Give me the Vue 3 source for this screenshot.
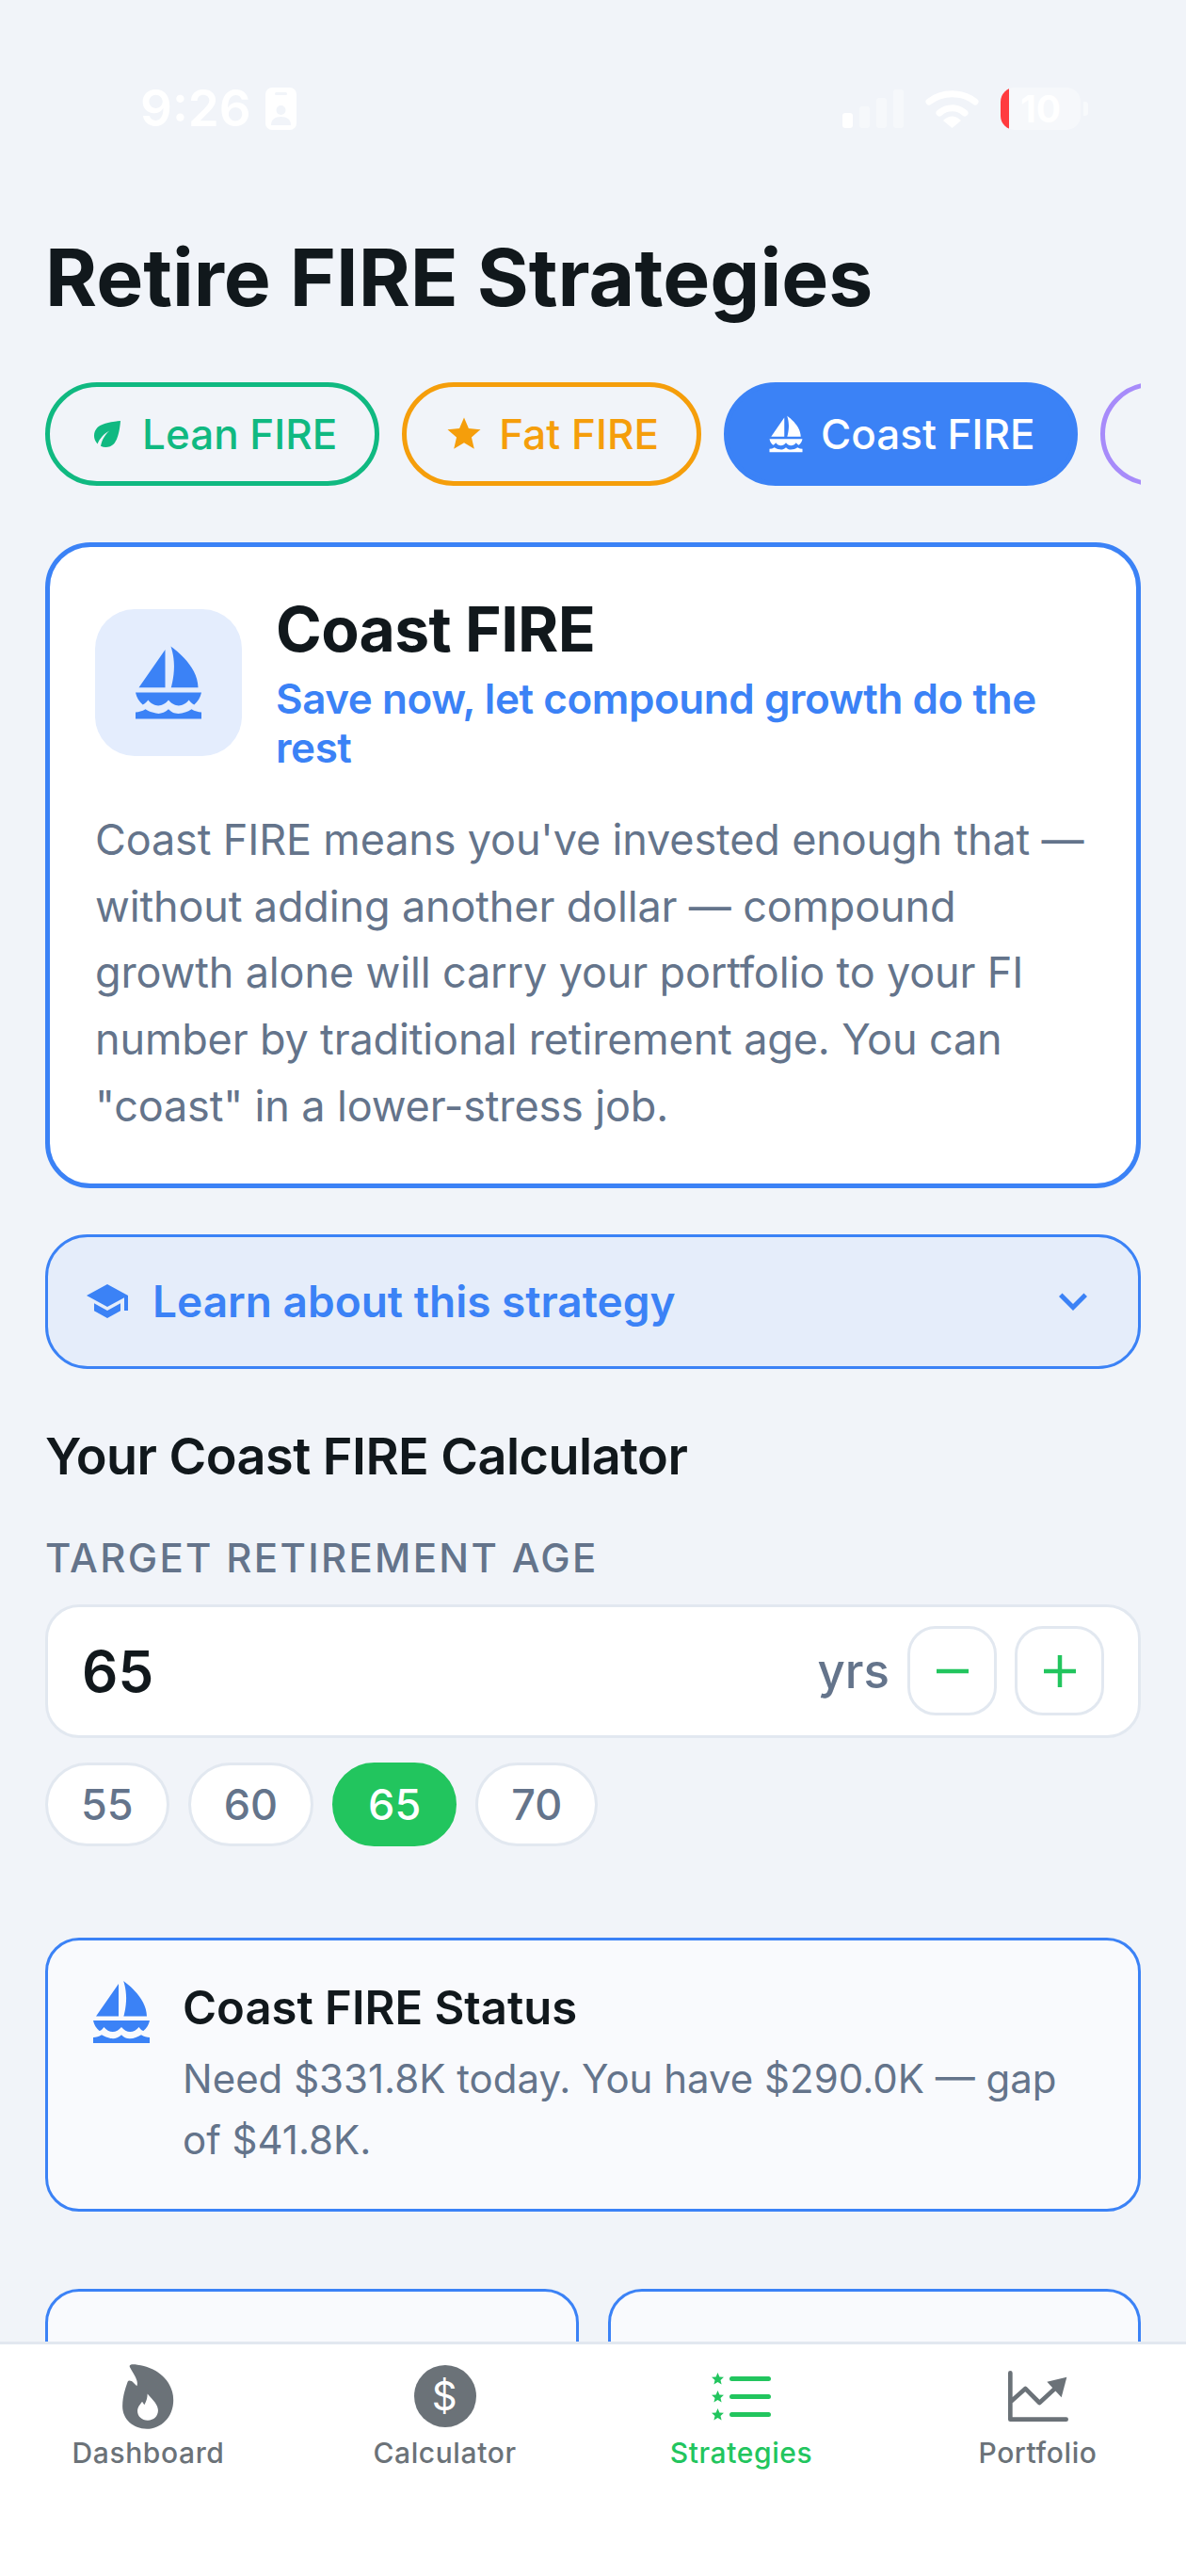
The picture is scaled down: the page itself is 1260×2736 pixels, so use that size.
<template>
  <div class="screen">
    <div class="main">
      <div class="status-bar">
        <div class="status-left">
          <span class="time">9:26</span>
          <svg class="id-icon" viewBox="0 0 33 45">
            <rect width="33" height="45" rx="7" fill="#fff" />
            <rect x="10" y="5" width="13" height="3" rx="1.5" fill="#f1f4f9" />
            <circle cx="16.5" cy="24" r="5" fill="#f1f4f9" />
            <path d="M6 40c0-6 4-9 10.5-9S27 34 27 40z" fill="#f1f4f9" />
          </svg>
        </div>
        <div class="status-right">
          <svg class="signal" viewBox="0 0 65 41">
            <rect x="0" y="25" width="11" height="16" rx="3" fill="#fff" />
            <rect x="18" y="18" width="11" height="23" rx="3" fill="#fff" opacity="0.4" />
            <rect x="36" y="9" width="11" height="32" rx="3" fill="#fff" opacity="0.4" />
            <rect x="54" y="0" width="11" height="41" rx="3" fill="#fff" opacity="0.4" />
          </svg>
          <svg class="wifi" viewBox="0 0 57 42">
            <path d="M4 14C18 3 39 3 53 14" fill="none" stroke="#fff" stroke-width="7" stroke-linecap="round" />
            <path d="M15 26C23 19 34 19 42 26" fill="none" stroke="#fff" stroke-width="7" stroke-linecap="round" />
            <path d="M28.500 42L19 34C25 28 32 28 38 34z" fill="#fff" />
          </svg>
          <div class="battery">
            <div class="battery-level"></div>
            10
          </div>
          <div class="battery-nub"></div>
        </div>
      </div>

      <h1 class="page-title">Retire FIRE Strategies</h1>

      <div class="chips">
        <button v-for="chip in chips" :key="chip.name" class="chip" :class="chip.cls">
          <svg class="chip-icon" viewBox="0 0 24 24" fill="currentColor"><path :d="chip.icon" /></svg>
          {{ chip.name }}
        </button>
      </div>

      <section class="hero-card">
        <div class="hero-head">
          <div class="hero-icon">
            <svg viewBox="0 0 24 24" fill="#3b82f6"><path :d="sailboat" /></svg>
          </div>
          <div>
            <h2 class="hero-title">Coast FIRE</h2>
            <p class="hero-sub">Save now, let compound growth do the rest</p>
          </div>
        </div>
        <p class="hero-desc">
          Coast FIRE means you've invested enough that — without adding another dollar — compound growth alone will carry your portfolio to your FI number by traditional retirement age. You can "coast" in a lower-stress job.
        </p>
      </section>

      <button class="learn">
        <svg class="learn-icon" viewBox="0 0 24 24" fill="#3b82f6">
          <path d="M5 13.180v4L12 21l7-3.820v-4L12 17l-7-3.820zM12 3L1 9l11 6 9-4.910V17h2V9L12 3z" />
        </svg>
        <span class="learn-text">Learn about this strategy</span>
        <svg class="learn-chevron" viewBox="0 0 24 24" fill="#3b82f6">
          <path d="M16.590 8.590L12 13.170 7.410 8.590 6 10l6 6 6-6z" />
        </svg>
      </button>

      <h3 class="calc-title">Your Coast FIRE Calculator</h3>
      <div class="field-label">TARGET RETIREMENT AGE</div>
      <div class="age-input">
        <span class="age-value">65</span>
        <span class="age-unit">yrs</span>
        <button class="step-btn">
          <svg viewBox="0 0 34 34"><path d="M0 17H34" /></svg>
        </button>
        <button class="step-btn">
          <svg viewBox="0 0 34 34"><path d="M0 17H34M17 0V34" /></svg>
        </button>
      </div>
      <div class="age-pills">
        <button v-for="age in ages" :key="age" class="pill" :class="{ 'pill--active': age === 65 }">{{ age }}</button>
      </div>

      <section class="status-card">
        <svg class="status-icon" viewBox="0 0 24 24" fill="#3b82f6"><path :d="sailboat" /></svg>
        <div>
          <div class="status-title">Coast FIRE Status</div>
          <p class="status-text">Need $331.8K today. You have $290.0K — gap of $41.8K.</p>
        </div>
      </section>

      <div class="stat-grid">
        <div class="stat-card"></div>
        <div class="stat-card"></div>
      </div>
    </div>

    <nav class="tabbar">
      <div class="tab">
        <div class="tab-icon">
          <svg class="flame" viewBox="92 120 165 208">
            <path fill="#6b7278" fill-rule="evenodd" d="M115 128C113 120 125 120 140 122C205 130 255 175 255 235C255 290 215 327 170 327C125 327 92 295 92 255C92 225 100 200 108 178C110 170 120 172 128 180L138 190C145 170 125 150 115 128ZM172 215C190 235 206 250 206 268C206 287 192 300 173 300C154 300 140 287 140 270C140 257 150 248 155 240L162 250C168 240 172 228 172 215Z" />
          </svg>
        </div>
        <span>Dashboard</span>
      </div>
      <div class="tab">
        <div class="tab-icon"><div class="coin">$</div></div>
        <span>Calculator</span>
      </div>
      <div class="tab tab--active">
        <div class="tab-icon">
          <svg class="star-list" viewBox="0 0 63 51" fill="#22c55e">
            <g v-for="y in [0, 19, 38]" :key="y" :transform="`translate(0 ${y})`">
              <path d="M6.500 0L8.400 4.400 13 4.800 9.500 7.900 10.600 12.500 6.500 10 2.400 12.500 3.500 7.900 0 4.800 4.600 4.400z" />
              <rect x="19" y="4" width="44" height="5" rx="2.500" />
            </g>
          </svg>
        </div>
        <span>Strategies</span>
      </div>
      <div class="tab">
        <div class="tab-icon">
          <svg class="chart" viewBox="1113 143 192 162">
            <path d="M1120 150V298H1298M1120 243L1168 200L1213 245L1262 200" fill="none" stroke="#6b7278" stroke-width="14" stroke-linecap="round" stroke-linejoin="round" />
            <path d="M1237 178L1300 163L1283 228z" fill="#6b7278" />
          </svg>
        </div>
        <span>Portfolio</span>
      </div>
    </nav>
  </div>
</template>

<script setup>
const sailboat =
  'M11 13.500V2L3 13.500h8zM21 13.500C21 6.500 12.700 1 12.700 1s1 2.500 1 6-.9 6.500-.9 6.500H21zM22 15H2c.3 1.500 1.100 2.800 2.200 3.700.7-.3 1.200-.8 1.600-1.400.8 1 2 1.700 3.100 1.700s2.300-.7 3.100-1.700c.8 1 2 1.700 3.100 1.700s2.300-.7 3.100-1.700c.4.6.9 1.100 1.600 1.400 1.100-.9 1.900-2.200 2.200-3.700zM2 23h20v-2c-1 0-2-.3-3-.9-1.200.8-2.600 1.300-4 1.300s-2.100-.4-3-1.300c-.9.9-2.100 1.300-3 1.300s-2.800-.5-4-1.300c-1 .6-2 .9-3 .9v2z'

const chips = [
  {
    name: 'Lean FIRE',
    cls: 'chip--lean',
    icon: 'M6.050 8.050c-2.730 2.730-2.730 7.150-.02 9.880 1.470-3.400 4.090-6.240 7.360-7.930-2.770 2.340-4.710 5.610-5.390 9.320 2.600 1.230 5.800.78 7.950-1.370C19.430 14.470 20 4 20 4S9.530 4.570 6.050 8.050z',
  },
  {
    name: 'Fat FIRE',
    cls: 'chip--fat',
    icon: 'M12 17.270L18.180 21l-1.640-7.030L22 9.240l-7.190-.61L12 2 9.190 8.630 2 9.240l5.460 4.730L5.820 21z',
  },
  { name: 'Coast FIRE', cls: 'chip--coast', icon: sailboat },
  { name: 'Barista FIRE', cls: 'chip--barista', icon: 'M4 4h14v9a5 5 0 0 1-5 5H9a5 5 0 0 1-5-5z' },
]

const ages = [55, 60, 65, 70]
</script>

<style>
html,
body {
  margin: 0;
  background: #f1f4f9;
}
</style>

<style scoped>
.screen {
  width: 1260px;
  height: 2736px;
  display: flex;
  flex-direction: column;
  overflow: hidden;
  background: #f1f4f9;
  font-family: Inter, "Liberation Sans", sans-serif;
  color: #11181c;
}

button {
  font-family: inherit;
  margin: 0;
}

p,
h1,
h2,
h3 {
  margin: 0;
}

.main {
  flex: 1;
  min-height: 0;
  overflow: hidden;
  padding: 0 48px;
}

.status-bar {
  height: 244px;
  box-sizing: border-box;
  padding: 90px 56px 0 101px;
  display: flex;
  justify-content: space-between;
  align-items: flex-start;
}

.status-left,
.status-right {
  display: flex;
  align-items: center;
  height: 50px;
}

.time {
  font-size: 53px;
  font-weight: 600;
  color: #fff;
}

.id-icon {
  width: 33px;
  height: 45px;
  margin-left: 15px;
}

.signal {
  width: 65px;
  height: 41px;
}

.wifi {
  width: 57px;
  height: 42px;
  margin-left: 23px;
}

.battery {
  position: relative;
  width: 85px;
  height: 45px;
  margin-left: 23px;
  border-radius: 15px;
  overflow: hidden;
  background: rgba(255, 255, 255, 0.4);
  color: #fff;
  font-size: 39px;
  font-weight: 700;
  line-height: 45px;
  text-align: center;
}

.battery-level {
  position: absolute;
  left: 0;
  top: 0;
  bottom: 0;
  width: 9px;
  background: #ff3b3f;
}

.battery-nub {
  width: 5px;
  height: 15px;
  margin-left: 3px;
  border-radius: 0 3px 3px 0;
  background: rgba(255, 255, 255, 0.5);
}

.page-title {
  font-size: 84px;
  font-weight: 700;
  line-height: 101px;
}

.chips {
  display: flex;
  gap: 24px;
  margin-top: 61px;
  overflow: hidden;
}

.chip {
  flex-shrink: 0;
  height: 110px;
  box-sizing: border-box;
  display: flex;
  align-items: center;
  gap: 16px;
  padding: 0 40px;
  border: 5px solid;
  border-radius: 55px;
  background: transparent;
  font-size: 44px;
  font-weight: 500;
}

.chip-icon {
  width: 42px;
  height: 42px;
}

.chip--lean {
  border-color: #10b981;
  color: #10b981;
}

.chip--fat {
  border-color: #f59e0b;
  color: #f59e0b;
}

.chip--coast {
  border-color: #3b82f6;
  background: #3b82f6;
  color: #fff;
}

.chip--barista {
  border-color: #a78bfa;
  color: #a78bfa;
}

.hero-card {
  margin-top: 60px;
  padding: 48px 48px 46px;
  background: #fff;
  border: 5px solid #3b82f6;
  border-radius: 48px;
}

.hero-head {
  display: flex;
  align-items: center;
  gap: 36px;
}

.hero-icon {
  flex-shrink: 0;
  width: 156px;
  height: 156px;
  display: flex;
  align-items: center;
  justify-content: center;
  border-radius: 42px;
  background: #e4edfd;
}

.hero-icon svg {
  width: 84px;
  height: 84px;
}

.hero-title {
  font-size: 66px;
  font-weight: 700;
  line-height: 79px;
  letter-spacing: -0.01em;
}

.hero-sub {
  margin-top: 8px;
  font-size: 44px;
  font-weight: 600;
  line-height: 52px;
  letter-spacing: -0.01em;
  color: #3b82f6;
}

.hero-desc {
  margin-top: 37px;
  font-size: 45px;
  line-height: 70.700px;
  letter-spacing: -0.15px;
  color: #64748b;
}

.learn {
  width: 100%;
  height: 143px;
  margin-top: 49px;
  padding: 0 39px;
  display: flex;
  align-items: center;
  border: 3px solid #3b82f6;
  border-radius: 45px;
  background: #e5edfa;
  color: #3b82f6;
}

.learn-icon {
  width: 48px;
  height: 48px;
}

.learn-text {
  flex: 1;
  margin-left: 24px;
  text-align: left;
  font-size: 46px;
  font-weight: 600;
}

.learn-chevron {
  width: 60px;
  height: 60px;
}

.calc-title {
  margin-top: 61px;
  font-size: 54px;
  font-weight: 600;
  line-height: 64px;
  letter-spacing: -0.01em;
}

.field-label {
  margin-top: 52px;
  font-size: 42px;
  font-weight: 500;
  line-height: 48px;
  letter-spacing: 0.055em;
  color: #64748b;
}

.age-input {
  height: 142px;
  box-sizing: border-box;
  margin-top: 25px;
  padding: 0 36px;
  display: flex;
  align-items: center;
  gap: 19px;
  background: #fff;
  border: 3px solid #e2e8f0;
  border-radius: 36px;
}

.age-value {
  flex: 1;
  font-size: 60px;
  font-weight: 600;
}

.age-unit {
  font-size: 51px;
  font-weight: 500;
  color: #64748b;
}

.step-btn {
  width: 95px;
  height: 95px;
  padding: 0;
  display: flex;
  align-items: center;
  justify-content: center;
  background: #fff;
  border: 3px solid #e2e8f0;
  border-radius: 30px;
}

.step-btn svg {
  width: 34px;
  height: 34px;
  fill: none;
  stroke: #22c55e;
  stroke-width: 4.500;
}

.age-pills {
  display: flex;
  gap: 20px;
  margin-top: 26px;
}

.pill {
  height: 89px;
  padding: 0 35px;
  background: #fff;
  border: 3px solid #e2e8f0;
  border-radius: 45px;
  font-size: 45px;
  font-weight: 500;
  color: #64748b;
}

.pill--active {
  background: #22c55e;
  border-color: #22c55e;
  color: #fff;
}

.status-card {
  margin-top: 97px;
  height: 291px;
  box-sizing: border-box;
  padding: 42px;
  display: flex;
  gap: 29px;
  background: #f9fafd;
  border: 3px solid #3b82f6;
  border-radius: 36px;
}

.status-icon {
  flex-shrink: 0;
  width: 72px;
  height: 72px;
  margin-top: -2px;
}

.status-title {
  font-size: 49px;
  font-weight: 600;
  line-height: 60px;
}

.status-text {
  margin-top: 12px;
  font-size: 42px;
  line-height: 65px;
  color: #64748b;
}

.stat-grid {
  display: grid;
  grid-template-columns: 1fr 1fr;
  gap: 31px;
  margin-top: 82px;
}

.stat-card {
  height: 240px;
  background: #f9fafd;
  border: 3px solid #3b82f6;
  border-radius: 36px;
}

.tabbar {
  flex-shrink: 0;
  height: 249px;
  box-sizing: border-box;
  display: grid;
  grid-template-columns: repeat(4, 1fr);
  padding-top: 18px;
  background: #fff;
  border-top: 3px solid #e2e8f0;
}

.tab {
  display: flex;
  flex-direction: column;
  align-items: center;
  font-size: 30px;
  font-weight: 500;
  line-height: 36px;
  letter-spacing: 0.02em;
  color: #6b7278;
}

.tab--active {
  color: #22c55e;
}

.tab-icon {
  height: 74px;
  margin-bottom: 5px;
  display: flex;
  align-items: center;
  justify-content: center;
}

.flame {
  width: 55px;
  height: 69px;
}

.coin {
  width: 66px;
  height: 66px;
  border-radius: 50%;
  background: #6b7278;
  color: #fff;
  font-size: 42px;
  font-weight: 400;
  line-height: 66px;
  text-align: center;
}

.star-list {
  width: 63px;
  height: 51px;
}

.chart {
  width: 64px;
  height: 54px;
}
</style>
